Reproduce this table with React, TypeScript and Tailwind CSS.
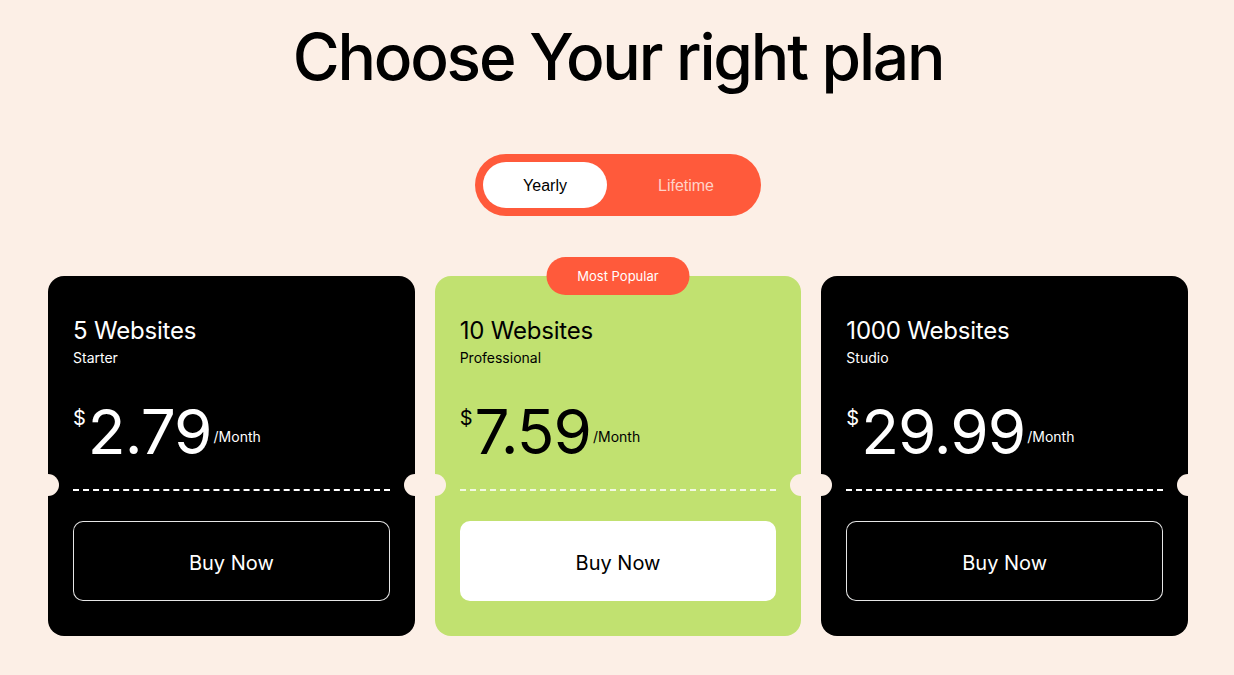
import React from "react";

type Plan = {
  title: string;
  sub: string;
  price: string;
  dark: boolean;
  popular?: boolean;
};

const plans: Plan[] = [
  { title: "5 Websites", sub: "Starter", price: "2.79", dark: true },
  { title: "10 Websites", sub: "Professional", price: "7.59", dark: false, popular: true },
  { title: "1000 Websites", sub: "Studio", price: "29.99", dark: true },
];

function Card({ p }: { p: Plan }) {
  const text = p.dark ? "text-white" : "text-black";
  return (
    <div
      className={`relative rounded-[16px] h-[360px] px-[25px] pt-[41px] flex flex-col ${
        p.dark ? "bg-black" : "bg-[#c1e170]"
      } ${text}`}
    >
      {p.popular && (
        <div className="absolute left-1/2 -translate-x-1/2 -top-[19px] h-[38px] w-[143px] rounded-full bg-[#ff5a3b] text-white text-[13px] pt-[2px] flex items-center justify-center">
          Most Popular
        </div>
      )}
      <div className="text-[24px] leading-[28px] tracking-[-0.2px]">{p.title}</div>
      <div className="text-[14px] leading-[18px] mt-[4px]">{p.sub}</div>
      <div className="flex items-start mt-[33px] h-[64px]">
        <span className="text-[20px] leading-none mt-[8px]">$</span>
        <span className="text-[62px] leading-[64px] tracking-[-1px] ml-[2px]">{p.price}</span>
        <span className="text-[14px] leading-none mt-[30px] ml-[2px]">/Month</span>
      </div>
      <div className="relative mt-[25px] h-[2px]">
        <div
          className={`h-[2px] w-full border-t-2 border-dashed ${
            p.dark ? "border-white" : "border-white/80"
          }`}
        />
        <div className="absolute -left-[36px] -top-[15px] w-[22px] h-[22px] rounded-full bg-[#fcefe6]" />
        <div className="absolute -right-[36px] -top-[15px] w-[22px] h-[22px] rounded-full bg-[#fcefe6]" />
      </div>
      <button
        className={`mt-[30px] h-[80px] w-full rounded-[10px] text-[20px] pt-[3px] flex items-center justify-center ${
          p.dark ? "border border-white/90 text-white bg-black" : "bg-white text-black"
        }`}
      >
        Buy Now
      </button>
    </div>
  );
}

export default function App() {
  return (
    <div
      className="min-h-[675px] w-full bg-[#fcefe6] flex flex-col items-center pl-[2px]"
      style={{ fontFamily: "Inter, 'Noto Sans', sans-serif" }}
    >
      <h1 className="mt-[18px] text-[64px] leading-[78px] font-medium tracking-[-2.2px] text-black">
        Choose Your right plan
      </h1>
      <div
        className="mt-[58px] w-[286px] h-[62px] rounded-full bg-[#ff5a3b] flex items-center px-[8px]"
        style={{ fontFamily: "'Liberation Sans', Arial, sans-serif" }}
      >
        <div className="w-[124px] h-[46px] rounded-full bg-white text-black text-[16px] pt-[1px] flex items-center justify-center">
          Yearly
        </div>
        <div className="flex-1 pl-[12px] pt-[1px] text-[16px] text-[#ffd2c8] flex items-center justify-center">
          Lifetime
        </div>
      </div>
      <div className="mt-[60px] w-[1140px] grid grid-cols-3 gap-[20px]">
        {plans.map((p) => (
          <Card key={p.title} p={p} />
        ))}
      </div>
    </div>
  );
}
